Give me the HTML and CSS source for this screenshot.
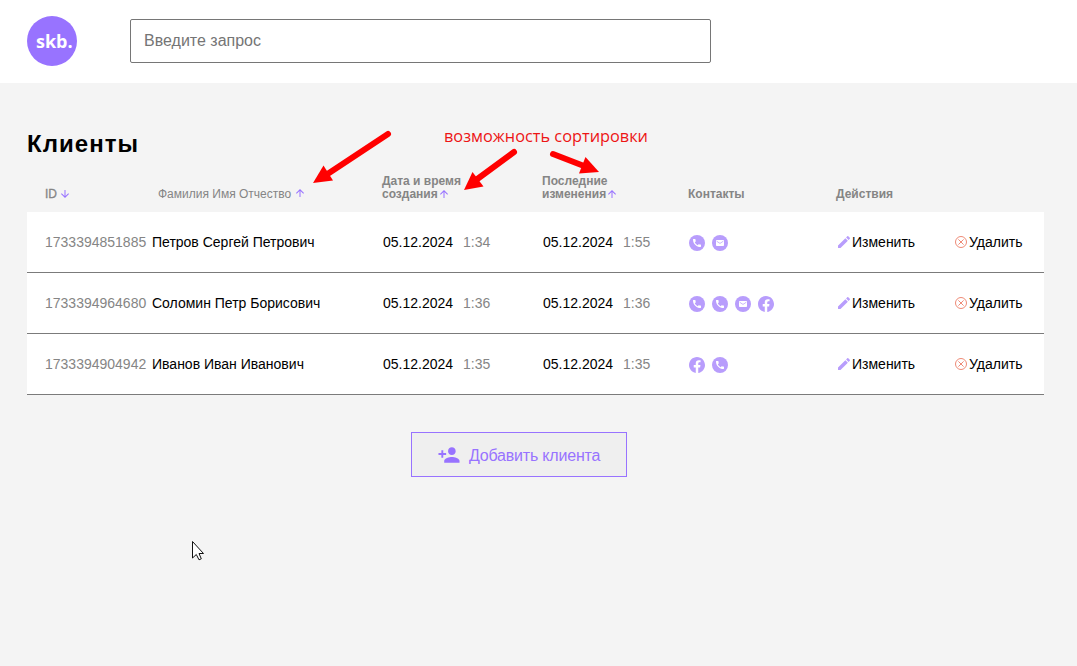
FILE: index.html
```html
<!DOCTYPE html>
<html lang="ru">
<head>
<meta charset="utf-8">
<title>Клиенты</title>
<link rel="stylesheet" href="styles.css">
</head>
<body>
<svg class="sprite" aria-hidden="true">
  <symbol id="up" viewBox="0 0 12 12"><path d="M2 6L2.705 6.705L5.5 3.915V10H6.5V3.915L9.29 6.71L10 6L6 2L2 6Z"/></symbol>
  <symbol id="down" viewBox="0 0 12 12"><path d="M10 6L9.295 5.295L6.5 8.085V2H5.5V8.085L2.71 5.29L2 6L6 10L10 6Z"/></symbol>
  <symbol id="phone" viewBox="0 0 16 16"><circle cx="8" cy="8" r="8"/><path fill="#fff" d="M11.56 9.5C11.01 9.5 10.48 9.41 9.99 9.25C9.84 9.2 9.66 9.24 9.54 9.36L8.84 10.24C7.59 9.64 6.41 8.5 5.78 7.2L6.65 6.46C6.77 6.34 6.8 6.16 6.76 6.01C6.59 5.52 6.51 4.99 6.51 4.44C6.51 4.2 6.31 4 6.07 4H4.53C4.29 4 4 4.11 4 4.44C4 8.57 7.44 12 11.56 12C11.88 12 12 11.72 12 11.48V9.94C12 9.7 11.8 9.5 11.56 9.5Z"/></symbol>
  <symbol id="mail" viewBox="0 0 16 16"><circle cx="8" cy="8" r="8"/><rect x="4" y="5" width="8" height="6" rx=".8" fill="#fff"/><path d="M4.8 5.9L8 7.9L11.2 5.9V6.65L8 8.65L4.8 6.65Z"/></symbol>
  <symbol id="fb" viewBox="0 0 16 16"><path d="M8 0C3.6 0 0 3.606 0 8.048C0 12.064 2.928 15.398 6.752 16V10.378H4.72V8.048H6.752V6.273C6.752 4.257 7.944 3.149 9.776 3.149C10.648 3.149 11.56 3.301 11.56 3.301V5.285H10.552C9.56 5.285 9.248 5.904 9.248 6.538V8.048H11.472L11.112 10.378H9.248V16C11.133 15.701 12.85 14.735 14.088 13.277C15.326 11.819 16 9.964 16 8.048C16 3.606 12.4 0 8 0Z"/></symbol>
  <symbol id="edit" viewBox="0 0 12 12"><path d="M0 9.5V12H2.5L9.873 4.627L7.373 2.127L0 9.5ZM11.807 2.693C12.067 2.433 12.067 2.013 11.807 1.753L10.247.193C9.987-.067 9.567-.067 9.307.193L8.087 1.413L10.587 3.913L11.807 2.693Z"/></symbol>
  <symbol id="cancel" viewBox="0 0 12 12"><g fill="none" stroke="currentColor"><circle cx="6" cy="6" r="5.5"/><path d="M3.4 3.4L8.6 8.6M8.6 3.4L3.4 8.6"/></g></symbol>
</svg>

<header class="header">
  <div class="logo">skb.</div>
  <input class="search" type="text" placeholder="Введите запрос">
</header>

<main class="main">
  <h1 class="title">Клиенты</h1>
  <div class="thead grid">
    <div class="th th-id">ID <svg class="arrow"><use href="#down"/></svg></div>
    <div class="th th-name">Фамилия Имя Отчество <svg class="arrow"><use href="#up"/></svg></div>
    <div class="th th-two">Дата и время<br>создания<svg class="arrow arrow-tight"><use href="#up"/></svg></div>
    <div class="th th-two">Последние<br>изменения<svg class="arrow arrow-tight"><use href="#up"/></svg></div>
    <div class="th">Контакты</div>
    <div class="th th-actions">Действия</div>
  </div>
  <div class="row grid">
    <span class="muted">1733394851885</span><span class="name">Петров Сергей Петрович</span>
    <span class="date">05.12.2024<span class="muted time">1:34</span></span>
    <span class="date">05.12.2024<span class="muted time">1:55</span></span>
    <span class="contacts"><svg><use href="#phone"/></svg><svg><use href="#mail"/></svg></span>
    <span class="action"><svg class="edit"><use href="#edit"/></svg>Изменить</span>
    <span class="action"><svg class="cancel"><use href="#cancel"/></svg>Удалить</span>
  </div>
  <div class="row grid">
    <span class="muted">1733394964680</span><span class="name">Соломин Петр Борисович</span>
    <span class="date">05.12.2024<span class="muted time">1:36</span></span>
    <span class="date">05.12.2024<span class="muted time">1:36</span></span>
    <span class="contacts"><svg><use href="#phone"/></svg><svg><use href="#phone"/></svg><svg><use href="#mail"/></svg><svg><use href="#fb"/></svg></span>
    <span class="action"><svg class="edit"><use href="#edit"/></svg>Изменить</span>
    <span class="action"><svg class="cancel"><use href="#cancel"/></svg>Удалить</span>
  </div>
  <div class="row grid">
    <span class="muted">1733394904942</span><span class="name">Иванов Иван Иванович</span>
    <span class="date">05.12.2024<span class="muted time">1:35</span></span>
    <span class="date">05.12.2024<span class="muted time">1:35</span></span>
    <span class="contacts"><svg><use href="#fb"/></svg><svg><use href="#phone"/></svg></span>
    <span class="action"><svg class="edit"><use href="#edit"/></svg>Изменить</span>
    <span class="action"><svg class="cancel"><use href="#cancel"/></svg>Удалить</span>
  </div>
  <button class="add" type="button">
    <svg width="22" height="16" viewBox="0 0 23 16"><path d="M14.5 8C16.71 8 18.5 6.21 18.5 4C18.5 1.79 16.71 0 14.5 0C12.29 0 10.5 1.79 10.5 4C10.5 6.21 12.29 8 14.5 8ZM5.5 6V3H3.5V6H.5V8H3.5V11H5.5V8H8.5V6H5.5ZM14.5 10C11.83 10 6.5 11.34 6.5 14V16H22.5V14C22.5 11.34 17.17 10 14.5 10Z"/></svg>
    <span class="add-text">Добавить клиента</span>
  </button>
</main>

<!-- Annotations over the page: sorting note, arrows and cursor -->
<svg class="notes" width="1077" height="666" viewBox="0 0 1077 666">
  <g stroke="#f00" stroke-width="6" stroke-linecap="round">
    <path d="M388 134L326 175"/><path d="M514 152L476 180"/><path d="M553 154L584 166"/>
  </g>
  <g fill="#f00">
    <path d="M313 183L323.500 165.500L333 180.500Z"/><path d="M464 190L472.500 172L483.500 186.500Z"/><path d="M599 172L579 173.500L585.500 157Z"/>
  </g>
  <text class="note" x="444" y="142" textLength="204" lengthAdjust="spacingAndGlyphs">возможность сортировки</text>
  <path d="M192.500 541.500V558L196.300 554.500L199 559.800L201.300 558.800L199 553.500H203.500Z" fill="#fff" stroke="#111"/>
</svg>
</body>
</html>
```
FILE: styles.css
```css
* { box-sizing: border-box; }
body {
  margin: 0;
  height: 666px;
  overflow: hidden;
  background: #f4f4f4;
  font: 14px/16px "Liberation Sans", Arial, sans-serif;
  color: #000;
}
svg { flex: none; fill: currentColor; }
.sprite { position: absolute; width: 0; height: 0; }
.header {
  display: flex;
  align-items: center;
  gap: 53px;
  height: 83px;
  padding: 0 27px 1px;
  background: #fff;
}
.logo {
  width: 50px;
  height: 50px;
  padding-left: 9px;
  border-radius: 50%;
  background: #9873ff;
  color: #fff;
  font: bold 18px/51px "Open Sans", sans-serif;
}
.search {
  width: 581px;
  height: 44px;
  padding: 0 13px;
  border: 1px solid #767676;
  border-radius: 2px;
  font: 16px "Liberation Sans", Arial, sans-serif;
}
.search::placeholder { color: #757575; }
.main { padding: 47px 33px 0 27px; }
.title { margin: 0; font-size: 24px; line-height: 28px; letter-spacing: 1.05px; }
.grid {
  display: grid;
  grid-template-columns: 107px 231px 160px 145px 149px 117px 1fr;
  padding-left: 18px;
  white-space: nowrap;
}
.thead {
  align-items: end;
  height: 54px;
  padding-bottom: 11px;
  color: #858585;
  font-size: 12px;
  font-weight: bold;
  line-height: 13px;
}
.th-id { font-weight: normal; -webkit-text-stroke: .3px #858585; }
.th-name { padding-left: 6px; font-weight: normal; }
.th-two { margin-left: -1px; }
.th-actions { margin-left: -1px; }
.arrow { width: 12px; height: 12px; margin: 0 -1px; color: #9873ff; vertical-align: -2px; }
.arrow-tight { margin-left: 0; }
.th-name .arrow { vertical-align: -1px; }
.row { height: 61px; align-items: center; background: #fff; border-bottom: 1px solid #7b7b7b; }
.muted { color: #858585; }
.time { margin-left: 10px; }
.contacts { display: flex; gap: 7px; padding: 2px 0 0 1px; color: #b89dfc; }
.contacts svg { width: 16px; height: 16px; }
.action { display: flex; align-items: center; gap: 2px; }
.action svg { width: 12px; height: 12px; margin-left: 1px; }
.action .edit { color: #b89dfc; }
.action .cancel { color: #ee8a76; }
.add {
  display: flex;
  align-items: center;
  gap: 9px;
  width: 216px;
  height: 45px;
  margin: 37px 0 0 384px;
  padding: 0 0 0 26px;
  border: 1px solid #9873ff;
  background: #efefef;
  color: #9873ff;
  font: 16px "Liberation Sans", Arial, sans-serif;
}
.add-text { padding-top: 2px; letter-spacing: -.2px; }
.notes { position: absolute; top: 0; left: 0; pointer-events: none; }
.note { fill: #ed1515; font: 17px "Open Sans", "Noto Sans", sans-serif; }
```
